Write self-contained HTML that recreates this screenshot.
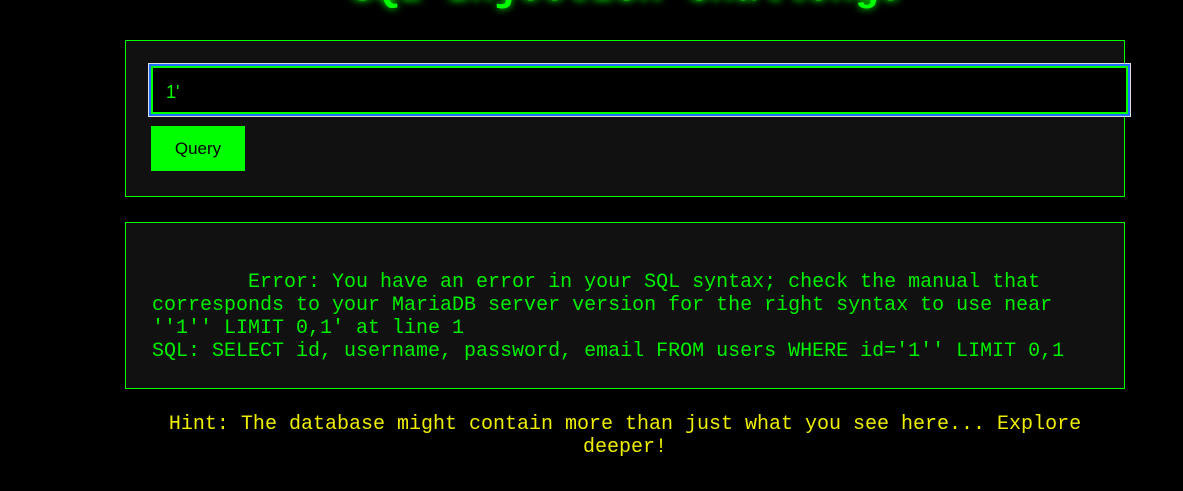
<!DOCTYPE html>
<html><head><style>
html,body{margin:0;padding:0;background:#000;width:1183px;height:491px;overflow:hidden}
h1{position:absolute;left:35px;width:1183px;top:-32px;margin:0;text-align:center;font:bold 40px "Liberation Mono",monospace;color:#0f0;text-shadow:0 0 8px #0f0}
.box{position:absolute;left:125px;width:998px;background:#111;border:1px solid #0f0}
.inp{position:absolute;left:25px;top:25px;width:977px;height:48px;background:#000;border:2px solid #0f0;outline:2px solid #1e6fff;box-shadow:0 0 0 3px #ddd;box-sizing:border-box;color:#0f0;font:18px "Liberation Sans Narrow","Liberation Sans",sans-serif;line-height:48px;padding-left:13px}
.btn{position:absolute;left:25px;top:85px;width:94px;height:45px;background:#0f0;color:#000;font:17px "Liberation Sans Narrow","Liberation Sans",sans-serif;line-height:45px;text-align:center}
pre{margin:0;position:absolute;left:26px;top:25px;font:20px "Liberation Mono",monospace;line-height:23px;color:#0e0;white-space:pre-wrap;width:960px}
.hint{position:absolute;left:125px;width:1000px;top:413px;text-align:center;font:20px "Liberation Mono",monospace;line-height:23px;color:#ee0}
</style></head><body>
<h1>SQL Injection Challenge</h1>
<div class="box" style="top:40px;height:155px">
<div class="inp">1'</div>
<div class="btn">Query</div>
</div>
<div class="box" style="top:222px;height:165px">
<pre>

        Error: You have an error in your SQL syntax; check the manual that corresponds to your MariaDB server version for the right syntax to use near ''1'' LIMIT 0,1' at line 1
SQL: SELECT id, username, password, email FROM users WHERE id='1'' LIMIT 0,1</pre>
</div>
<div class="hint">Hint: The database might contain more than just what you see here... Explore deeper!</div>
</body></html>
